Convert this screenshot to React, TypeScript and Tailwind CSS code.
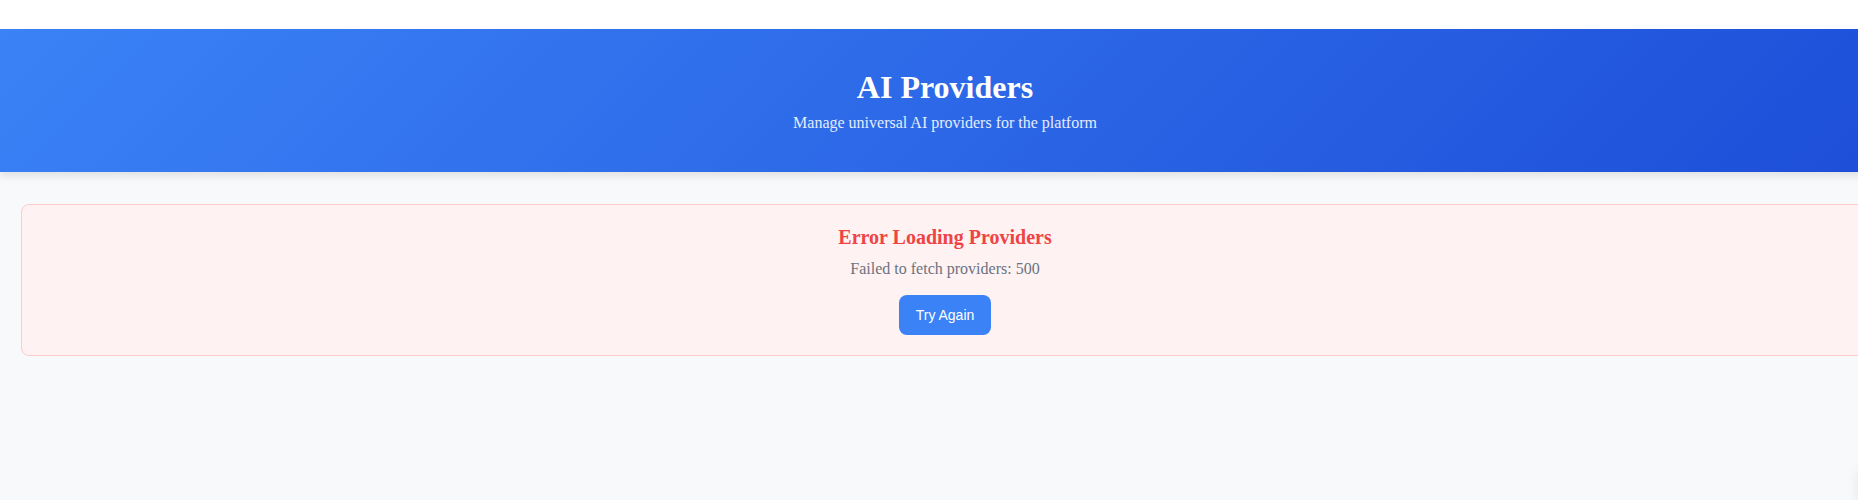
import React from 'react';

const serif = { fontFamily: '"Liberation Serif", "Times New Roman", serif' };

const App: React.FC = () => {
  const error = 'Failed to fetch providers: 500';

  return (
    <div className="w-full min-h-[500px] overflow-hidden bg-[#f8f9fb]" style={serif}>
      <div className="w-[1890px]">
        {/* Top strip */}
        <div className="h-[29px] bg-white" />

        {/* Header */}
        <header className="bg-[linear-gradient(135deg,#3b82f6_0%,#1d4ed8_100%)] pt-[40px] pb-[40px] text-center text-white shadow-[0_4px_8px_rgba(0,0,0,0.1)] relative z-10">
          <h1 className="text-[32px] font-bold leading-[37px] mb-[8px]">AI Providers</h1>
          <p className="text-[16px] leading-[18px] text-[#e4ecfd]">
            Manage universal AI providers for the platform
          </p>
        </header>

        {/* Content */}
        <main className="px-[21px] pt-[32px] pb-[40px]">
          <div className="bg-[#fef2f2] border border-[#fecaca] rounded-[8px] pt-[21px] pb-5 px-5 text-center">
            <h3 className="text-[20px] font-bold leading-[23px] text-[#ef4444] mb-[11px]">
              Error Loading Providers
            </h3>
            <p className="text-[16px] leading-[18px] text-[#6b7280] mb-[17px]">{error}</p>
            <button
              className="h-[40px] px-[17px] rounded-[8px] bg-[#3b82f6] text-white text-[14px] leading-[40px]"
              style={{ fontFamily: '"Liberation Sans", Arial, sans-serif' }}
            >
              Try Again
            </button>
          </div>
        </main>
      </div>

      {/* Floating widget, mostly off-screen */}
      <div className="fixed right-[-62px] bottom-[-14px] w-[60px] h-[60px] rounded-full bg-white shadow-[0_4px_16px_rgba(0,0,0,0.12)]" />
    </div>
  );
};

export default App;
